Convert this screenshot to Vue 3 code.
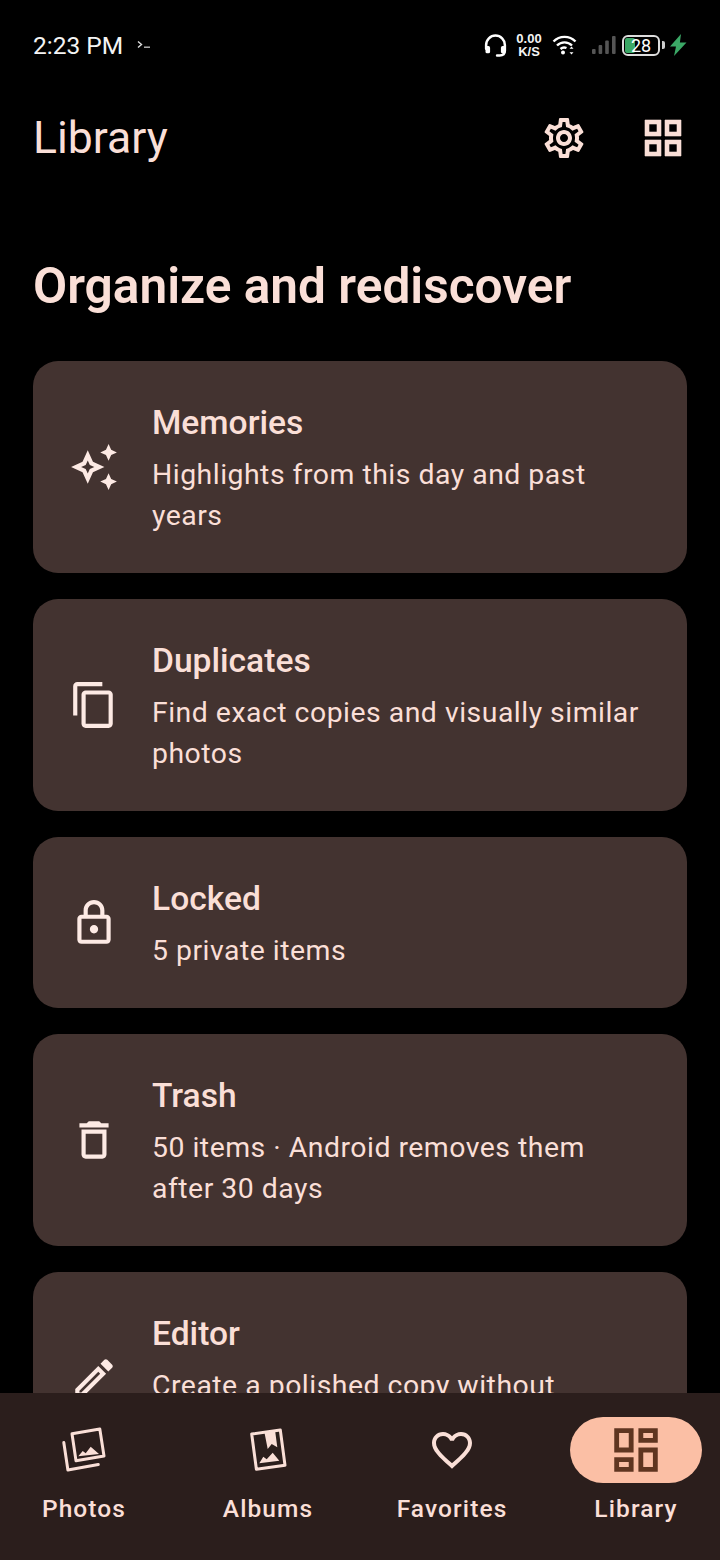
<template>
  <div class="screen">
    <div class="content">
      <div class="status-bar">
        <div class="status-left">
          <span class="clock">2:23 PM</span>
          <svg class="terminal" viewBox="0 0 14 10" width="14" height="10">
            <path d="M1 1.5 4.5 4.5 1 7.5" fill="none" stroke="#ddd" stroke-width="1.4" />
            <path d="M7 7.2h6" stroke="#bbb" stroke-width="1.4" />
          </svg>
        </div>
        <div class="status-right">
          <svg class="headphones" viewBox="0 0 24 24" width="25" height="25">
            <path d="M3 15v-3.5a9 9 0 0 1 18 0V17c0 3-2 4.5-5 4.5h-2.5" fill="none" stroke="#fff" stroke-width="2.4" stroke-linecap="round" />
            <rect x="2.4" y="12.5" width="4.4" height="7" rx="1.6" fill="#fff" />
            <rect x="17.2" y="12.5" width="4.4" height="7" rx="1.6" fill="#fff" />
          </svg>
          <div class="speed">
            <span>0.00</span>
            <span>K/S</span>
          </div>
          <svg class="wifi" viewBox="0 0 25 20" width="25" height="20">
            <path d="M1.5 6.5a15.5 15.5 0 0 1 22 0M5 10.5a10.5 10.5 0 0 1 15 0M8.5 14a5.5 5.5 0 0 1 6 -1" fill="none" stroke="#fff" stroke-width="2.4" />
            <circle cx="11" cy="17.5" r="2" fill="#fff" />
            <path d="M19.5 11.5l2 2.2h-4zM19.5 19.5l2-2.2h-4z" fill="#fff" />
          </svg>
          <svg class="signal" viewBox="0 0 24 18" width="24" height="18">
            <rect x="0" y="13" width="3.6" height="5" rx="1" fill="#555" />
            <rect x="6.6" y="9" width="3.6" height="9" rx="1" fill="#555" />
            <rect x="13.2" y="4.5" width="3.6" height="13.5" rx="1" fill="#555" />
            <rect x="20" y="0" width="3.6" height="18" rx="1" fill="#555" />
          </svg>
          <div class="battery">
            <div class="battery-body">
              <div class="battery-fill"></div>
              <span class="battery-level">28</span>
            </div>
            <div class="battery-nub"></div>
          </div>
          <svg class="bolt" viewBox="0 0 18 22" width="18" height="22">
            <path d="M12 0 1 12.5h6L5 22 17.5 8.5h-6.6z" fill="#3ba866" />
          </svg>
        </div>
      </div>

      <header class="app-bar">
        <h1 class="app-title">Library</h1>
        <div class="app-actions">
          <svg class="icon" viewBox="0 0 24 24">
            <path :d="icons.settings" />
          </svg>
          <svg class="icon thick" viewBox="0 0 24 24">
            <path :d="icons.grid" />
          </svg>
        </div>
      </header>

      <h2 class="headline">Organize and rediscover</h2>

      <div class="cards">
        <div v-for="card in cards" :key="card.title" class="card">
          <svg class="card-icon" viewBox="0 0 24 24">
            <path :d="card.icon" />
          </svg>
          <div class="card-text">
            <div class="card-title">{{ card.title }}</div>
            <div class="card-sub">{{ card.sub }}</div>
          </div>
        </div>
      </div>
    </div>

    <nav class="bottom-nav">
      <div class="nav-item">
        <div class="nav-icon">
          <svg viewBox="0 0 58 58">
            <path d="M17 12.7 44.8 8.1 49 35 21 39.8z" class="line" />
            <path d="M8.8 21.5 12.9 49l30.4-5.5" class="line" />
            <path d="M23.3 35.3 27.7 30l3 2.3 5-6.6L44 33z" class="solid" />
          </svg>
        </div>
        <span class="nav-label">Photos</span>
      </div>
      <div class="nav-item">
        <div class="nav-icon">
          <svg viewBox="0 0 58 58">
            <path d="M12.7 13 41.3 9 46 44.2 17.4 48.2z" class="line" />
            <path d="M25.3 10.7 36 9l2.3 17.3-5.6-3.3-4 5z" class="solid" />
            <path d="M20.3 42.3 24.3 35.7l3.4 2.6 6-6.6 6.6 8z" class="solid" />
          </svg>
        </div>
        <span class="nav-label">Albums</span>
      </div>
      <div class="nav-item">
        <div class="nav-icon">
          <svg class="icon" viewBox="-2.5 -2.5 29 29">
            <path :d="icons.heart" />
          </svg>
        </div>
        <span class="nav-label">Favorites</span>
      </div>
      <div class="nav-item">
        <div class="nav-icon active">
          <svg class="icon" viewBox="0 0 24 24">
            <path :d="icons.dashboard" />
          </svg>
        </div>
        <span class="nav-label">Library</span>
      </div>
    </nav>
  </div>
</template>

<script setup>
const icons = {
  settings:
    "M19.43 12.98c.04-.32.07-.64.07-.98 0-.34-.03-.66-.07-.98l2.11-1.65c.19-.15.24-.42.12-.64l-2-3.46c-.09-.16-.26-.25-.44-.25-.06 0-.12.01-.17.03l-2.49 1c-.52-.4-1.08-.73-1.69-.98l-.38-2.65C14.46 2.18 14.25 2 14 2h-4c-.25 0-.46.18-.49.42l-.38 2.65c-.61.25-1.17.59-1.69.98l-2.49-1c-.06-.02-.12-.03-.18-.03-.17 0-.34.09-.43.25l-2 3.46c-.13.22-.07.49.12.64l2.11 1.65c-.04.32-.07.65-.07.98 0 .33.03.66.07.98l-2.11 1.65c-.19.15-.24.42-.12.64l2 3.46c.09.16.26.25.44.25.06 0 .12-.01.17-.03l2.49-1c.52.4 1.08.73 1.69.98l.38 2.65c.03.24.24.42.49.42h4c.25 0 .46-.18.49-.42l.38-2.65c.61-.25 1.17-.59 1.69-.98l2.49 1c.06.02.12.03.18.03.17 0 .34-.09.43-.25l2-3.46c.12-.22.07-.49-.12-.64l-2.11-1.65zm-1.98-1.71c.04.31.05.52.05.73 0 .21-.02.43-.05.73l-.14 1.13.89.7 1.08.84-.7 1.21-1.27-.51-1.04-.42-.9.68c-.43.32-.84.56-1.25.73l-1.06.43-.16 1.13-.2 1.35h-1.4l-.19-1.35-.16-1.13-1.06-.43c-.43-.18-.83-.41-1.23-.71l-.91-.7-1.06.43-1.27.51-.7-1.21 1.08-.84.89-.7-.14-1.13c-.03-.31-.05-.54-.05-.74s.02-.43.05-.73l.14-1.13-.89-.7-1.08-.84.7-1.21 1.27.51 1.04.42.9-.68c.43-.32.84-.56 1.25-.73l1.06-.43.16-1.13.2-1.35h1.39l.19 1.35.16 1.13 1.06.43c.43.18.83.41 1.23.71l.91.7 1.06-.43 1.27-.51.7 1.21-1.07.85-.89.7.14 1.13zM12 8c-2.21 0-4 1.79-4 4s1.79 4 4 4 4-1.79 4-4-1.79-4-4-4zm0 6c-1.1 0-2-.9-2-2s.9-2 2-2 2 .9 2 2-.9 2-2 2z",
  grid: "M3 3v8h8V3H3zm6 6H5V5h4v4zm-6 4v8h8v-8H3zm6 6H5v-4h4v4zm4-16v8h8V3h-8zm6 6h-4V5h4v4zm-6 4v8h8v-8h-8zm6 6h-4v-4h4v4z",
  heart:
    "M16.5 3c-1.74 0-3.41.81-4.5 2.09C10.91 3.81 9.24 3 7.5 3 4.42 3 2 5.42 2 8.5c0 3.78 3.4 6.86 8.55 11.54L12 21.35l1.45-1.32C18.6 15.36 22 12.28 22 8.5 22 5.42 19.58 3 16.5 3zm-4.4 15.55l-.1.1-.1-.1C7.14 14.24 4 11.39 4 8.5 4 6.5 5.5 5 7.5 5c1.54 0 3.04.99 3.57 2.36h1.87C13.46 5.99 14.96 5 16.5 5c2 0 3.5 1.5 3.5 3.5 0 2.89-3.14 5.74-7.9 10.05z",
  dashboard:
    "M19 5v2h-4V5h4M9 5v6H5V5h4m10 8v6h-4v-6h4M9 17v2H5v-2h4M21 3h-8v6h8V3zM11 3H3v10h8V3zm10 8h-8v10h8V11zm-10 4H3v6h8v-6z",
};

const cards = [
  {
    title: "Memories",
    sub: "Highlights from this day and past years",
    icon: "M19 9l1.25-2.75L23 5l-2.75-1.25L19 1l-1.25 2.75L15 5l2.75 1.25L19 9zm-7.5.5L9 4 6.5 9.5 1 12l5.5 2.5L9 20l2.5-5.5L17 12l-5.5-2.5zM9.99 12.99 9 15.17l-.99-2.18-2.18-.99 2.18-.99.99-2.18.99 2.18 2.18.99-2.18.99zM19 15l-1.25 2.75L15 19l2.75 1.25L19 23l1.25-2.75L23 19l-2.75-1.25L19 15z",
  },
  {
    title: "Duplicates",
    sub: "Find exact copies and visually similar photos",
    icon: "M16 1H4c-1.1 0-2 .9-2 2v14h2V3h12V1zm3 4H8c-1.1 0-2 .9-2 2v14c0 1.1.9 2 2 2h11c1.1 0 2-.9 2-2V7c0-1.1-.9-2-2-2zm0 16H8V7h11v14z",
  },
  {
    title: "Locked",
    sub: "5 private items",
    icon: "M18 8h-1V6c0-2.76-2.24-5-5-5S7 3.24 7 6v2H6c-1.1 0-2 .9-2 2v10c0 1.1.9 2 2 2h12c1.1 0 2-.9 2-2V10c0-1.1-.9-2-2-2zM9 6c0-1.66 1.34-3 3-3s3 1.34 3 3v2H9V6zm9 14H6V10h12v10zm-6-3c1.1 0 2-.9 2-2s-.9-2-2-2-2 .9-2 2 .9 2 2 2z",
  },
  {
    title: "Trash",
    sub: "50 items · Android removes them after 30 days",
    icon: "M16 9v10H8V9h8m-1.5-6h-5l-1 1H5v2h14V4h-3.5l-1-1zM18 7H6v12c0 1.1.9 2 2 2h8c1.1 0 2-.9 2-2V7z",
  },
  {
    title: "Editor",
    sub: "Create a polished copy without changing the original",
    icon: "M14.06 9.02l.92.92L5.92 19H5v-.92l9.06-9.06M17.66 3c-.25 0-.51.1-.7.29l-1.83 1.83 3.75 3.75 1.83-1.83c.39-.39.39-1.02 0-1.41l-2.34-2.34c-.2-.2-.45-.29-.71-.29zm-3.6 3.19L3 17.25V21h3.75L17.81 9.94l-3.75-3.75z",
  },
];
</script>

<style>
html,
body {
  margin: 0;
  background: #000;
}
</style>

<style scoped>
.screen {
  width: 720px;
  height: 1560px;
  display: flex;
  flex-direction: column;
  overflow: hidden;
  background: #000;
  font-family: Roboto, "Liberation Sans", sans-serif;
  color: #fadfd7;
}

.content {
  flex: 1;
  min-height: 0;
  overflow: hidden;
}

.status-bar {
  height: 90px;
  padding: 0 33px;
  display: flex;
  align-items: center;
  justify-content: space-between;
  color: #f4f4f4;
}

.status-left {
  display: flex;
  align-items: center;
  gap: 14px;
}

.clock {
  font-size: 24.5px;
}

.status-right {
  display: flex;
  align-items: center;
}

.headphones {
  margin-right: 6px;
}

.speed {
  display: flex;
  flex-direction: column;
  align-items: center;
  width: 30px;
  margin-right: 8px;
  font-family: "Liberation Sans", sans-serif;
  font-size: 13px;
  line-height: 13px;
  font-weight: 700;
}

.wifi {
  margin-right: 15px;
}

.signal {
  margin-right: 6px;
}

.battery {
  display: flex;
  align-items: center;
  margin-right: 4px;
}

.battery-body {
  position: relative;
  width: 38px;
  height: 21px;
  box-sizing: border-box;
  border: 2px solid #ddd;
  border-radius: 6px;
  padding: 1px;
}

.battery-fill {
  width: 10px;
  height: 100%;
  background: #3ba866;
  border-radius: 2px;
}

.battery-level {
  position: absolute;
  inset: 0;
  display: flex;
  align-items: center;
  justify-content: center;
  font-size: 18px;
  line-height: 17px;
  color: #fff;
}

.battery-nub {
  width: 3px;
  height: 8px;
  margin-left: 2px;
  background: #ccc;
  border-radius: 0 2px 2px 0;
}

.app-bar {
  height: 96px;
  padding: 0 33px;
  display: flex;
  align-items: center;
  justify-content: space-between;
}

.app-title {
  margin: 0;
  font-size: 44.5px;
  font-weight: 400;
}

.app-actions {
  display: flex;
  gap: 51px;
}

.icon {
  width: 48px;
  height: 48px;
  fill: currentColor;
  display: block;
}

.thick path {
  stroke: currentColor;
  stroke-width: 0.3;
}

.headline {
  margin: 0;
  padding: 70px 33px 45px;
  font-size: 49.6px;
  line-height: 60px;
  font-weight: 600;
}

.cards {
  padding: 0 33px;
  display: flex;
  flex-direction: column;
  gap: 26px;
}

.card {
  display: flex;
  align-items: center;
  gap: 33px;
  padding: 40px 42px 37px 36px;
  background: #433330;
  border-radius: 25px;
}

.card-icon {
  flex: none;
  width: 50px;
  height: 50px;
  margin-bottom: 3px;
  fill: #fdeae4;
}

.card-text {
  min-width: 0;
}

.card-title {
  font-size: 33.6px;
  line-height: 44px;
  font-weight: 500;
  margin-bottom: 9px;
}

.card-sub {
  font-size: 28.4px;
  line-height: 41px;
  letter-spacing: 0.5px;
}

.bottom-nav {
  flex: none;
  height: 167px;
  display: grid;
  grid-template-columns: repeat(4, 168px);
  gap: 16px;
  background: #2b1e1c;
}

.nav-item {
  display: flex;
  flex-direction: column;
  align-items: center;
  padding-top: 24px;
}

.nav-icon {
  width: 132px;
  height: 66px;
  border-radius: 33px;
  display: flex;
  align-items: center;
  justify-content: center;
}

.nav-icon.active {
  background: #fbbfa5;
  color: #5f3520;
}

.nav-icon svg {
  width: 58px;
  height: 58px;
}

.line {
  fill: none;
  stroke: currentColor;
  stroke-width: 3;
  stroke-linejoin: round;
  stroke-linecap: round;
}

.solid {
  fill: currentColor;
}

.nav-label {
  margin-top: 9px;
  font-size: 24.5px;
  line-height: 34px;
  font-weight: 500;
  letter-spacing: 1.1px;
}
</style>
